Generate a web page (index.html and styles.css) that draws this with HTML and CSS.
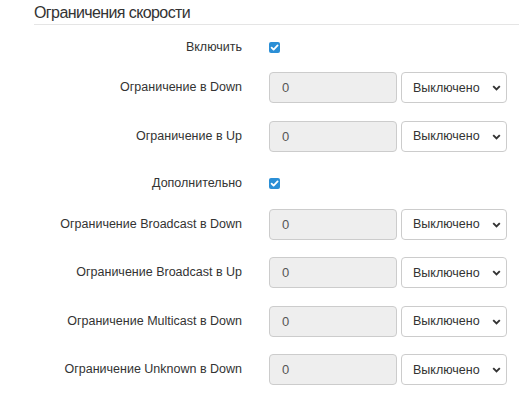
FILE: index.html
```html
<!DOCTYPE html>
<html lang="ru">
<head>
    <meta charset="UTF-8">
    <meta name="viewport" content="width=device-width, initial-scale=1.0">
    <title>Ограничения скорости</title>
    <link rel="stylesheet" href="styles.css">
</head>
<body>
    <h3 class="section-title">Ограничения скорости</h3>

    <form class="speed-form">
        <div class="form-row check-row">
            <label class="row-label">Включить</label>
            <span class="check"><svg viewBox="0 0 11 11" width="11" height="11"><path d="M2.6 5.6 L4.6 7.6 L8.6 3.4" fill="none" stroke="#fff" stroke-width="1.8" stroke-linecap="round" stroke-linejoin="round"/></svg></span>
        </div>
        <div class="form-row">
            <label class="row-label">Ограничение в Down</label>
            <input class="rate-input" type="text" value="0" readonly>
            <div class="select-wrap">
                <select class="rate-select"><option>Выключено</option></select>
                <svg class="chevron" viewBox="0 0 9 6" width="9" height="6"><path d="M1.2 1.2 L4.5 4.5 L7.8 1.2" fill="none" stroke="#333" stroke-width="1.9"/></svg>
            </div>
        </div>
        <div class="form-row">
            <label class="row-label">Ограничение в Up</label>
            <input class="rate-input" type="text" value="0" readonly>
            <div class="select-wrap">
                <select class="rate-select"><option>Выключено</option></select>
                <svg class="chevron" viewBox="0 0 9 6" width="9" height="6"><path d="M1.2 1.2 L4.5 4.5 L7.8 1.2" fill="none" stroke="#333" stroke-width="1.9"/></svg>
            </div>
        </div>
        <div class="form-row check-row">
            <label class="row-label">Дополнительно</label>
            <span class="check"><svg viewBox="0 0 11 11" width="11" height="11"><path d="M2.6 5.6 L4.6 7.6 L8.6 3.4" fill="none" stroke="#fff" stroke-width="1.8" stroke-linecap="round" stroke-linejoin="round"/></svg></span>
        </div>
        <div class="form-row">
            <label class="row-label">Ограничение Broadcast в Down</label>
            <input class="rate-input" type="text" value="0" readonly>
            <div class="select-wrap">
                <select class="rate-select"><option>Выключено</option></select>
                <svg class="chevron" viewBox="0 0 9 6" width="9" height="6"><path d="M1.2 1.2 L4.5 4.5 L7.8 1.2" fill="none" stroke="#333" stroke-width="1.9"/></svg>
            </div>
        </div>
        <div class="form-row">
            <label class="row-label">Ограничение Broadcast в Up</label>
            <input class="rate-input" type="text" value="0" readonly>
            <div class="select-wrap">
                <select class="rate-select"><option>Выключено</option></select>
                <svg class="chevron" viewBox="0 0 9 6" width="9" height="6"><path d="M1.2 1.2 L4.5 4.5 L7.8 1.2" fill="none" stroke="#333" stroke-width="1.9"/></svg>
            </div>
        </div>
        <div class="form-row">
            <label class="row-label">Ограничение Multicast в Down</label>
            <input class="rate-input" type="text" value="0" readonly>
            <div class="select-wrap">
                <select class="rate-select"><option>Выключено</option></select>
                <svg class="chevron" viewBox="0 0 9 6" width="9" height="6"><path d="M1.2 1.2 L4.5 4.5 L7.8 1.2" fill="none" stroke="#333" stroke-width="1.9"/></svg>
            </div>
        </div>
        <div class="form-row">
            <label class="row-label">Ограничение Unknown в Down</label>
            <input class="rate-input" type="text" value="0" readonly>
            <div class="select-wrap">
                <select class="rate-select"><option>Выключено</option></select>
                <svg class="chevron" viewBox="0 0 9 6" width="9" height="6"><path d="M1.2 1.2 L4.5 4.5 L7.8 1.2" fill="none" stroke="#333" stroke-width="1.9"/></svg>
            </div>
        </div>
    </form>
</body>
</html>
```

FILE: styles.css
```css
body {
    margin: 0;
    font-family: 'Liberation Sans', Arial, sans-serif;
    color: #333;
    background: #fff;
    overflow: hidden;
}
.section-title {
    margin: 0 0 0 34px;
    padding: 3px 0 1px;
    font-size: 16px;
    font-weight: normal;
    line-height: 20px;
    letter-spacing: -0.6px;
    border-bottom: 1px solid #e5e5e5;
}
.speed-form {
    margin-top: 7.5px;
}
.form-row {
    display: flex;
    align-items: center;
    height: 31px;
    margin-bottom: 17.5px;
}
.check-row {
    height: 22px;
    align-items: flex-end;
}
.row-label {
    width: 242px;
    margin-right: 27px;
    text-align: right;
    font-size: 12.5px;
    line-height: 15px;
}
.check {
    width: 11px;
    height: 11px;
    margin-bottom: 2px;
    border-radius: 2px;
    background: #2b8fd6;
    display: flex;
}
.rate-input {
    box-sizing: border-box;
    width: 128px;
    height: 31px;
    margin: 0 4px 0 0;
    padding: 0 12px;
    border: 1px solid #ccc;
    border-radius: 4px;
    background: #eee;
    color: #555;
    font-family: inherit;
    font-size: 13px;
    outline: none;
}
.select-wrap {
    position: relative;
}
.rate-select {
    box-sizing: border-box;
    width: 106px;
    height: 31px;
    margin: 0;
    padding: 0 11px;
    border: 1px solid #ccc;
    border-radius: 4px;
    background: #fff;
    color: #333;
    font-family: inherit;
    font-size: 12.5px;
    appearance: none;
    -webkit-appearance: none;
    display: block;
}
.chevron {
    position: absolute;
    right: 6px;
    top: 13px;
    pointer-events: none;
}
```
